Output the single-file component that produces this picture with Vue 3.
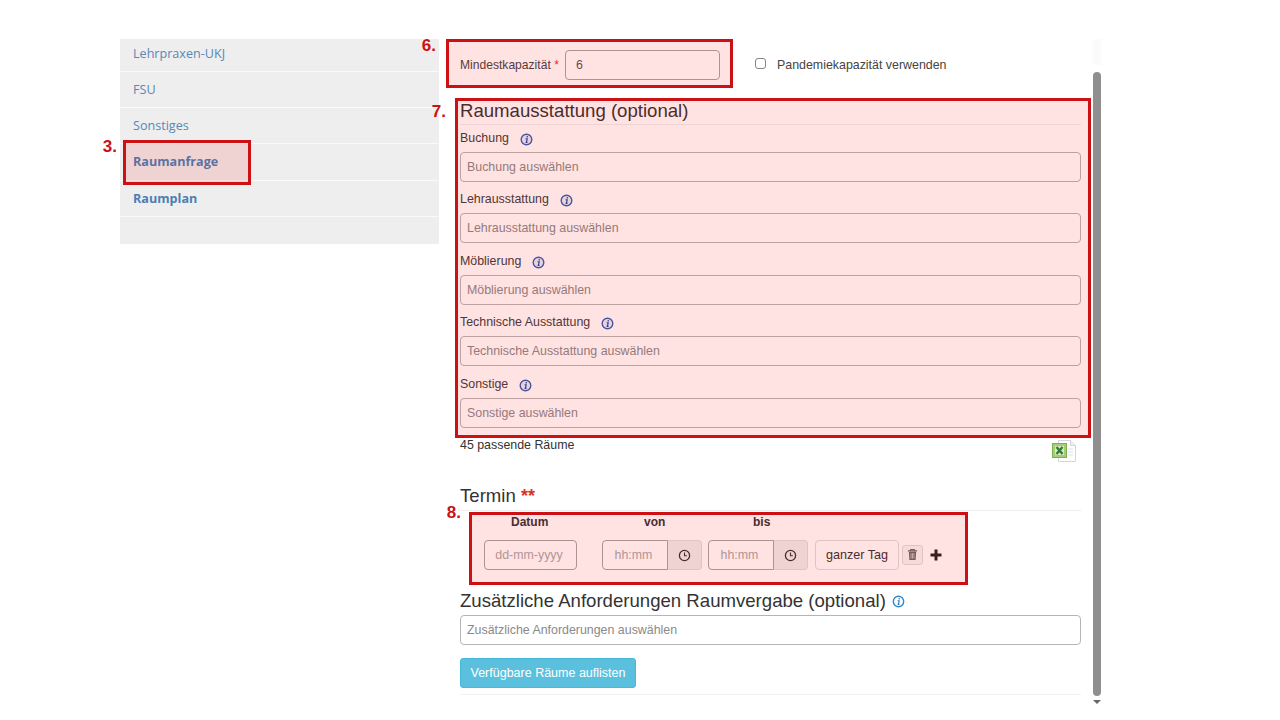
<script setup>
const fields = [
  { label: 'Buchung', placeholder: 'Buchung auswählen' },
  { label: 'Lehrausstattung', placeholder: 'Lehrausstattung auswählen' },
  { label: 'Möblierung', placeholder: 'Möblierung auswählen' },
  { label: 'Technische Ausstattung', placeholder: 'Technische Ausstattung auswählen' },
  { label: 'Sonstige', placeholder: 'Sonstige auswählen' }
]
const nav = [
  { label: 'Lehrpraxen-UKJ' },
  { label: 'FSU' },
  { label: 'Sonstiges' },
  { label: 'Raumanfrage', bold: true },
  { label: 'Raumplan', bold: true }
]
</script>

<template>
  <div class="page">
    <aside class="sidebar">
      <a v-for="item in nav" :key="item.label" class="nav-item" :class="{ bold: item.bold }">{{ item.label }}</a>
    </aside>

    <main class="main">
      <div class="capacity-row">
        <label class="cap-label">Mindestkapazität <span class="req">*</span></label>
        <input class="control cap-input" value="6" />
        <label class="check">
          <span class="box"></span>
          <span>Pandemiekapazität verwenden</span>
        </label>
      </div>

      <h2 class="heading first">Raumausstattung (optional)</h2>
      <div v-for="f in fields" :key="f.label" class="field">
        <div class="field-label">
          <span>{{ f.label }}</span>
          <svg class="info" viewBox="0 0 14 14" width="13" height="13">
            <circle cx="7" cy="7" r="5.7" fill="#e6ecfa" stroke="#2f62b5" stroke-width="1.5" />
            <path d="M7.8 3.3v1.5M6 6.2h1.7L6.9 10.2H6M6.7 10.2h1.4" fill="none" stroke="#1f4a98" stroke-width="1.3" />
          </svg>
        </div>
        <input class="control wide" :placeholder="f.placeholder" />
      </div>

      <div class="result-row">
        <span>45 passende Räume</span>
        <svg class="excel" viewBox="0 0 24 22" width="24" height="22">
          <path d="M6.5 .5h12l5 5v16h-17z" fill="#fff" stroke="#d2d6d9" stroke-width="1" />
          <path d="M18.5 .5v5h5" fill="#eef0f2" stroke="#d2d6d9" stroke-width="1" />
          <path d="M16 9h5M16 12h5M16 15h5" stroke="#dde0e2" stroke-width="1" />
          <rect x=".5" y="3.5" width="14" height="14" fill="#a6cc78" stroke="#7fae4e" stroke-width="1" />
          <rect x="3" y="6" width="9" height="9" fill="#d9e9c4" />
          <path d="M4.5 7l6 7M10.5 7l-6 7" stroke="#2f7d32" stroke-width="2.4" />
        </svg>
      </div>

      <h2 class="heading termin">Termin <span class="req-big">**</span></h2>

      <div class="slot-head">
        <span class="h-date">Datum</span>
        <span class="h-von">von</span>
        <span class="h-bis">bis</span>
      </div>
      <div class="slot-row">
        <input class="control date" placeholder="dd-mm-yyyy" />
        <div class="time t-von">
          <input class="control time-input" placeholder="hh:mm" />
          <span class="addon">
            <svg viewBox="0 0 14 14" width="13" height="13"><circle cx="7" cy="7" r="5.5" fill="none" stroke="#333" stroke-width="1.4" /><path d="M7 3.8V7.2h2.6" fill="none" stroke="#333" stroke-width="1.2" /></svg>
          </span>
        </div>
        <div class="time t-bis">
          <input class="control time-input" placeholder="hh:mm" />
          <span class="addon">
            <svg viewBox="0 0 14 14" width="13" height="13"><circle cx="7" cy="7" r="5.5" fill="none" stroke="#333" stroke-width="1.4" /><path d="M7 3.8V7.2h2.6" fill="none" stroke="#333" stroke-width="1.2" /></svg>
          </span>
        </div>
        <button class="whole-day">ganzer Tag</button>
        <span class="trash">
          <svg viewBox="0 0 12 14" width="11" height="13"><path d="M1 3h10M4 3V1.5h4V3" fill="none" stroke="#666" stroke-width="1.2" /><path d="M2 4h8l-.6 9H2.6z" fill="#666" /><path d="M4.4 5.5v6M6 5.5v6M7.6 5.5v6" stroke="#eee" stroke-width=".7" /></svg>
        </span>
        <svg class="plus" viewBox="0 0 12 12" width="12" height="12"><path d="M6 .5v11M.5 6h11" stroke="#222" stroke-width="3" /></svg>
      </div>

      <h2 class="heading extra">
        <span>Zusätzliche Anforderungen Raumvergabe (optional)</span>
        <svg class="info-h" viewBox="0 0 14 14" width="13" height="13">
          <circle cx="7" cy="7" r="5.6" fill="#fff" stroke="#2f86c9" stroke-width="1.5" />
          <path d="M7.8 3.3v1.5M6 6.2h1.7L6.9 10.2H6M6.7 10.2h1.4" fill="none" stroke="#2f86c9" stroke-width="1.3" />
        </svg>
      </h2>
      <input class="control wide" placeholder="Zusätzliche Anforderungen auswählen" />
      <button class="primary">Verfügbare Räume auflisten</button>
      <div class="foot-line"></div>
    </main>

    <div class="scrollbar">
      <div class="track-top"></div>
      <div class="thumb"></div>
      <div class="arrow"></div>
    </div>

    <div class="mark m3"><b class="num">3.</b></div>
    <div class="mark m6"><b class="num">6.</b></div>
    <div class="mark m7"><b class="num">7.</b></div>
    <div class="mark m8"><b class="num">8.</b></div>
  </div>
</template>

<style>
html, body { margin: 0; background: #fff; }
</style>

<style scoped>
.page {
  position: relative;
  box-sizing: border-box;
  width: 1280px;
  height: 720px;
  overflow: hidden;
  display: flex;
  align-items: flex-start;
  padding: 39px 0 0 120px;
  background: #fff;
  font-family: "Liberation Sans", Arial, sans-serif;
  color: #333;
  font-size: 12px;
}

/* sidebar */
.sidebar {
  width: 319px;
  height: 205px;
  background: #eee;
  display: flex;
  flex-direction: column;
  overflow: hidden;
  font-family: "Open Sans", "Noto Sans", sans-serif;
  flex: none;
}
.nav-item {
  box-sizing: border-box;
  flex: none;
  height: 36.3px;
  line-height: 36px;
  padding-left: 13px;
  font-size: 12.6px;
  color: #5b87b5;
  border-bottom: 1.5px solid #fafafa;
}
.nav-item:first-child { margin-top: -3.5px; }
.nav-item.bold { font-weight: 700; color: #4a7fb5; }

/* main */
.main {
  width: 621px;
  margin-left: 21px;
  flex: none;
  display: flex;
  flex-direction: column;
}
.control {
  box-sizing: border-box;
  height: 30px;
  border: 1px solid #b5b5b5;
  border-radius: 4px;
  background: #fff;
  font: 12.4px "Liberation Sans", Arial, sans-serif;
  color: #555;
  padding: 0 6px;
  outline: none;
}
.control::placeholder { color: #8a8a8a; opacity: 1; }
.wide { width: 621px; flex: none; }

.capacity-row {
  display: flex;
  align-items: center;
  margin-top: 11px;
  height: 30px;
}
.cap-label { width: 105px; flex: none; font-size: 12.1px; color: #444; }
.req { color: #d9342b; }
.cap-input { width: 155px; padding-left: 10px; border-color: #a5a5a5; }
.check { display: flex; align-items: center; margin-left: 35px; font-size: 12.4px; color: #444; }
.box {
  box-sizing: border-box;
  width: 11px;
  height: 11px;
  margin-right: 11px;
  margin-top: -3px;
  border: 1px solid #858585;
  border-radius: 3px;
  background: #fff;
}

.heading {
  margin: 0;
  font-weight: 400;
  font-size: 18.6px;
  line-height: 22px;
  color: #333;
}
.heading.first {
  margin-top: 20px;
  padding-bottom: 2px;
  border-bottom: 1px solid #eee;
  box-sizing: border-box;
  height: 25px;
}
.field { height: 61.4px; flex: none; }
.field-label {
  height: 27px;
  display: flex;
  align-items: center;
  padding-bottom: 1px;
  box-sizing: border-box;
  font-size: 12.4px;
  color: #3c3c3c;
}
.info { margin-left: 11px; margin-top: 3px; }

.result-row {
  display: flex;
  justify-content: space-between;
  height: 40px;
  margin-top: 1.5px;
  padding-right: 5px;
  line-height: 25px;
  font-size: 12.4px;
  color: #333;
}
.excel { margin-top: 7px; }

.heading.termin {
  margin-top: 12px;
  height: 26px;
  border-bottom: 1px solid #eee;
  box-sizing: border-box;
  line-height: 22px;
}
.req-big { color: #d9342b; font-weight: 700; font-size: 18px; }

.slot-head {
  position: relative;
  height: 29px;
  display: grid;
  grid-template-columns: 142px 106px 100px;
  font-size: 12px;
  font-weight: 700;
  color: #333;
  line-height: 23px;
}
.h-date { padding-left: 51px; }
.h-von { padding-left: 42px; }
.h-bis { padding-left: 45px; }

.slot-row {
  display: flex;
  align-items: center;
  height: 30px;
  padding-left: 24px;
}
.date { width: 93px; text-align: center; padding: 0 3px 0 0; flex: none; border-color: #a5a5a5; }
.date::placeholder, .time-input::placeholder { color: #a8a8a8; }
.time { display: flex; flex: none; }
.t-von { margin-left: 25px; }
.t-bis { margin-left: 6px; }
.time-input {
  width: 66px;
  border-radius: 4px 0 0 4px;
  border-color: #a5a5a5;
  padding: 0 3px 0 0;
  text-align: center;
}
.addon {
  box-sizing: border-box;
  width: 34px;
  height: 30px;
  display: flex;
  align-items: center;
  justify-content: center;
  background: #eee;
  border: 1px solid #ddd;
  border-left: 0;
  border-radius: 0 4px 4px 0;
}
.whole-day {
  box-sizing: border-box;
  width: 84px;
  height: 30px;
  margin-left: 7px;
  padding: 0;
  background: #fff;
  border: 1px solid #ddd;
  border-radius: 4px;
  font: 12.6px "Liberation Sans", Arial, sans-serif;
  color: #333;
}
.trash {
  box-sizing: border-box;
  width: 21px;
  height: 20px;
  margin-left: 3px;
  margin-top: -1px;
  border: 1px solid #ddd;
  border-radius: 3px;
  background: #f5f5f5;
  display: flex;
  align-items: center;
  justify-content: center;
}
.plus { margin-left: 7px; }

.heading.extra {
  margin-top: 20px;
  height: 25px;
  padding-bottom: 4px;
  box-sizing: border-box;
  display: flex;
  align-items: center;
}
.info-h { margin-left: 6px; margin-top: 2px; }
.primary {
  align-self: flex-start;
  box-sizing: border-box;
  width: 176px;
  height: 30px;
  margin-top: 13px;
  padding: 0;
  background: #5bc0de;
  border: 1px solid #46b8da;
  border-radius: 3px;
  color: #fff;
  font: 12.5px "Liberation Sans", Arial, sans-serif;
}
.foot-line { height: 1px; margin-top: 6px; background: #f3f3f3; }

/* scrollbar */
.scrollbar {
  width: 8px;
  flex: none;
  margin-left: 12px;
  display: flex;
  flex-direction: column;
  align-items: center;
}
.track-top { width: 8px; height: 26px; margin-bottom: 7px; background: #fbfbfb; }
.thumb { width: 8px; height: 624px; border-radius: 4px; background: #8f8f8f; }
.arrow {
  width: 0;
  height: 0;
  margin-top: 4px;
  border-left: 4px solid transparent;
  border-right: 4px solid transparent;
  border-top: 4px solid #666;
}

/* annotation overlays */
.mark {
  position: absolute;
  box-sizing: border-box;
  border: 3px solid #cc1014;
  background: rgba(255, 0, 0, 0.11);
}
.num {
  position: absolute;
  font: 700 17px/18px "Liberation Sans", Arial, sans-serif;
  color: #cc1014;
}
.m3 { left: 123px; top: 140px; width: 128px; height: 45px; }
.m6 { left: 446px; top: 39px; width: 287px; height: 49px; }
.m7 { left: 455px; top: 98px; width: 636px; height: 340px; }
.m8 { left: 469px; top: 512px; width: 499px; height: 73px; }
.m3 .num { top: -5px; right: calc(100% + 9px); }
.m6 .num { top: -5px; right: calc(100% + 13px); }
.m7 .num { top: 2px; right: calc(100% + 12px); }
.m8 .num { top: -11px; right: calc(100% + 11px); }
</style>
